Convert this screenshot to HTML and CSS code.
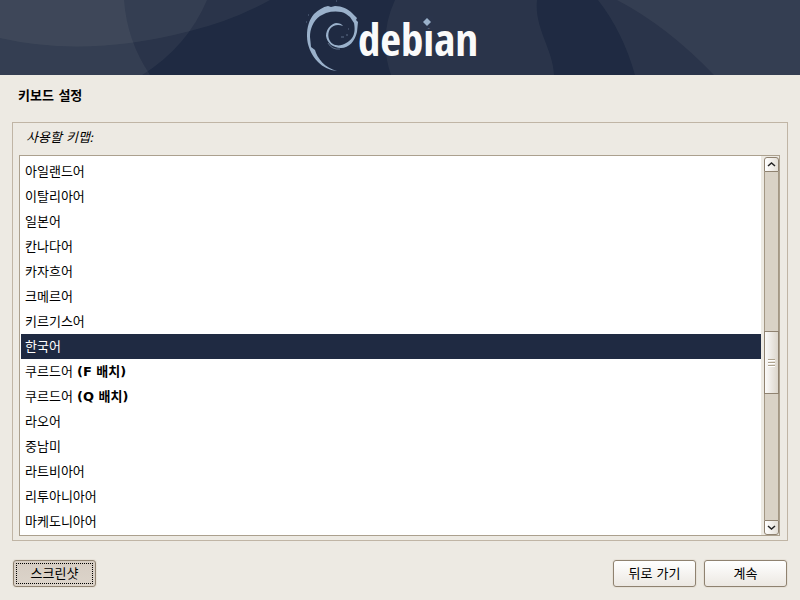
FILE: index.html
```html
<!DOCTYPE html>
<html lang="ko">
<head>
    <meta charset="UTF-8">
    <meta name="viewport" content="width=device-width, initial-scale=1.0">
    <title>키보드 설정</title>
    <link rel="stylesheet" href="styles.css">
</head>
<body>
    <header class="banner">
        <svg class="banner-art" viewBox="0 0 800 75" preserveAspectRatio="xMidYMin slice" aria-hidden="true">
            <g class="tint">
                <path d="M0 0H270Q232 21 190 31Q87 58 0 38Z"/>
                <path d="M0 0H207Q187 47 142 75H0Z"/>
                <path d="M0 0H124Q127 41 150 75H0Z"/>
                <path d="M395 0Q378 37 391 75H554C553 49 534 28 537 0Z"/>
                <path d="M598 0Q623 32 635 75H800V0Z"/>
                <path d="M617 0Q667 26 714 75H800V0Z"/>
            </g>
            <g class="swirl">
                <path d="M337 71C329 70 323 67 318 62C311 55 307 45 307 36C307 27 309 20 314 14C318 10 323 7 328 6L331 7L335 6C342 6 348 9 352 13L357 18L356 20L358 22L357 32C355 41 349 48 341 48C333 48 327 43 326 36C326 29 331 24 336 23C339 23 342 24 343 26C338 24 333 25 330 29C327 34 328 41 333 44C340 48 348 43 352 38C355 34 355 28 354 23L350 17L346 14C341 11 333 11 326 13L320 16C313 21 310 29 310 37L311 47L315 50C317 58 325 68 337 71Z"/>
                <g class="wisp">
                    <path d="M328 43Q332 50 340 49"/>
                    <path d="M306 22h1M308 15h1M336 1h1M341 37h3M346 35h2M348 29h1"/>
                </g>
            </g>
        </svg>
        <div class="brand">debian<svg class="brand-dot" viewBox="0 0 12 12" aria-hidden="true"><rect width="12" height="12"/><path d="M6 2L10 6L6 10L2 6Z"/></svg></div>
    </header>

    <form class="installer">
        <h1 class="title">키보드 설정</h1>

        <section class="panel" aria-labelledby="keymap-label">
            <h2 class="panel-label" id="keymap-label">사용할 키맵:</h2>
            <div class="listbox">
                <div class="list" role="radiogroup" aria-labelledby="keymap-label">
                    <label class="row"><input type="radio" name="keymap">아일랜드어</label>
                    <label class="row"><input type="radio" name="keymap">이탈리아어</label>
                    <label class="row"><input type="radio" name="keymap">일본어</label>
                    <label class="row"><input type="radio" name="keymap">칸나다어</label>
                    <label class="row"><input type="radio" name="keymap">카자흐어</label>
                    <label class="row"><input type="radio" name="keymap">크메르어</label>
                    <label class="row"><input type="radio" name="keymap">키르기스어</label>
                    <label class="row"><input type="radio" name="keymap" checked>한국어</label>
                    <label class="row"><input type="radio" name="keymap">쿠르드어 <b>(F 배치)</b></label>
                    <label class="row"><input type="radio" name="keymap">쿠르드어 <b>(Q 배치)</b></label>
                    <label class="row"><input type="radio" name="keymap">라오어</label>
                    <label class="row"><input type="radio" name="keymap">중남미</label>
                    <label class="row"><input type="radio" name="keymap">라트비아어</label>
                    <label class="row"><input type="radio" name="keymap">리투아니아어</label>
                    <label class="row"><input type="radio" name="keymap">마케도니아어</label>
                </div>
                <div class="scrollbar">
                    <button type="button" class="arrow arrow-up" aria-label="위로"><svg viewBox="0 0 9 9"><path d="M1 6L4.500 3L8 6"/></svg></button>
                    <div class="track">
                        <div class="before"></div>
                        <div class="thumb"><i></i><i></i><i></i></div>
                        <div class="after"></div>
                    </div>
                    <button type="button" class="arrow arrow-down" aria-label="아래로"><svg viewBox="0 0 9 9"><path d="M1 3L4.500 6L8 3"/></svg></button>
                </div>
            </div>
        </section>

        <footer class="actions">
            <button type="button" class="btn btn-pressed">스크린샷</button>
            <button type="button" class="btn">뒤로 가기</button>
            <button type="button" class="btn">계속</button>
        </footer>
    </form>
</body>
</html>
```
FILE: styles.css
```css
:root{
    --bg: #edeae3;
    --navy: #1f2a42;
    --edge: #8f8270;
    --line: #c0b5a5;
}
*{
    box-sizing: border-box;
    margin: 0;
    padding: 0;
}
body{
    display: flex;
    flex-direction: column;
    min-height: 100vh;
    background: var(--bg);
    color: #000;
    font: 13px/25px "DejaVu Sans", "Noto Sans CJK KR", sans-serif;
}

/* banner */
.banner{
    position: relative;
    display: flex;
    justify-content: center;
    height: 75px;
    background: var(--navy);
    overflow: hidden;
}
.banner-art{
    position: absolute;
    inset: 0;
    width: 100%;
    height: 100%;
}
.tint{
    fill: #fffff0;
    fill-opacity: .05;
}
.swirl{
    fill: #9ab1cb;
}
.wisp{
    fill: none;
    stroke: #9ab1cb;
    stroke-opacity: .5;
}
.brand{
    position: relative;
    padding-left: 36px;
    color: #fafafa;
    font: bold 45px/77px "Open Sans Condensed", "Liberation Sans Narrow", "DejaVu Sans Condensed", sans-serif;
}
.brand-dot{
    position: absolute;
    top: 16px;
    right: 45px;
    width: 12px;
    height: 12px;
    fill: #9ab1cb;
}
.brand-dot rect{
    fill: #2a344b;
}

/* page */
.installer{
    flex: 1;
    display: flex;
    flex-direction: column;
    padding: 8px 12px 13px;
}
.title{
    padding: 0 6px;
    font-size: 13px;
    font-weight: bold;
}
.panel{
    margin-top: 14px;
    padding: 2px 7px 4px 6px;
    border: 1px solid var(--line);
}
.panel-label{
    padding: 0 7px;
    margin-bottom: 5px;
    font-size: 13px;
    font-style: italic;
    font-weight: normal;
}

/* keymap list */
.listbox{
    display: flex;
    border: 1px solid #aba08e;
    padding-left: 1px;
    background: #fff;
}
.list{
    flex: 1;
    padding: 3px 0 1px;
}
.row{
    display: block;
    padding: 0 4px;
}
.row:has(:checked){
    background: var(--navy);
    color: #fff;
}
.row input{
    position: absolute;
    opacity: 0;
}

.scrollbar{
    display: flex;
    flex-direction: column;
    width: 18px;
    padding: 1px 0 0 3px;
    background: var(--bg);
}
.arrow{
    display: grid;
    place-items: center;
    height: 15px;
    border: 1px solid var(--edge);
    background: linear-gradient(to right, #fff, #e4dfd7);
}
.arrow-up{
    border-radius: 3px 3px 0 0;
}
.arrow-down{
    border-radius: 0 0 3px 3px;
}
.arrow svg{
    width: 9px;
    height: 9px;
    fill: none;
    stroke: #222;
    stroke-width: 1.5;
}
.track{
    flex: 1;
    display: flex;
    flex-direction: column;
    border: solid #a39784;
    border-width: 0 1px;
    background: #d9d2c6;
}
.before{
    flex: 159;
}
.after{
    flex: 126;
}
.thumb{
    display: flex;
    flex-direction: column;
    align-items: center;
    justify-content: center;
    gap: 1px;
    height: 63px;
    margin: 0 -1px;
    border: 1px solid var(--edge);
    background: linear-gradient(to right, #fbfaf9, #dcd6cc);
}
.thumb i{
    width: 7px;
    height: 2px;
    border-top: 1px solid #aea38f;
    border-bottom: 1px solid #fff;
}

/* buttons */
.actions{
    display: flex;
    gap: 8px;
    margin-top: auto;
    padding: 0 1px;
}
.btn{
    width: 83px;
    height: 27px;
    border: 1px solid var(--edge);
    border-radius: 3px;
    box-shadow: 0 0 0 1px #e6e1d8;
    background: linear-gradient(#fff, #ece8e2);
    color: #000;
    font: inherit;
}
.btn-pressed{
    margin-right: auto;
    outline: 1px dotted #000;
    outline-offset: -4px;
    background: linear-gradient(#d6cdc3, #dcd4ca);
}
```
